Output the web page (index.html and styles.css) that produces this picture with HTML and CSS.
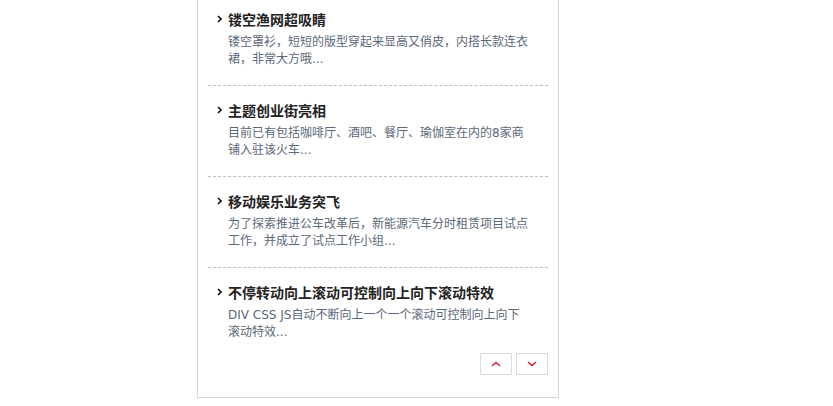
FILE: index.html
```html
<!DOCTYPE html>
<html lang="zh-CN">
<head>
<meta charset="utf-8">
<title>滚动新闻</title>
<link rel="stylesheet" href="styles.css">
</head>
<body>
<div class="box">
  <ul class="list">
    <li class="item">
      <h3 class="title"><svg class="arrow" width="5" height="8" viewBox="0 0 5 8"><path d="M1 1 L4 4 L1 7" fill="none" stroke="#111" stroke-width="1.6"/></svg>镂空渔网超吸睛</h3>
      <p class="desc">镂空罩衫，短短的版型穿起来显高又俏皮，内搭长款连衣裙，非常大方哦...</p>
    </li>
    <li class="item">
      <h3 class="title"><svg class="arrow" width="5" height="8" viewBox="0 0 5 8"><path d="M1 1 L4 4 L1 7" fill="none" stroke="#111" stroke-width="1.6"/></svg>主题创业街亮相</h3>
      <p class="desc">目前已有包括咖啡厅、酒吧、餐厅、瑜伽室在内的8家商铺入驻该火车...</p>
    </li>
    <li class="item">
      <h3 class="title"><svg class="arrow" width="5" height="8" viewBox="0 0 5 8"><path d="M1 1 L4 4 L1 7" fill="none" stroke="#111" stroke-width="1.6"/></svg>移动娱乐业务突飞</h3>
      <p class="desc">为了探索推进公车改革后，新能源汽车分时租赁项目试点工作，并成立了试点工作小组...</p>
    </li>
    <li class="item last">
      <h3 class="title"><svg class="arrow" width="5" height="8" viewBox="0 0 5 8"><path d="M1 1 L4 4 L1 7" fill="none" stroke="#111" stroke-width="1.6"/></svg>不停转动向上滚动可控制向上向下滚动特效</h3>
      <p class="desc">DIV CSS JS自动不断向上一个一个滚动可控制向上向下滚动特效...</p>
    </li>
  </ul>
  <div class="controls">
    <button class="btn" type="button" aria-label="向上"><svg width="10" height="6" viewBox="0 0 10 6"><path d="M1 5 L5 1.5 L9 5" fill="none" stroke="#d0213a" stroke-width="1.5"/></svg></button>
    <button class="btn" type="button" aria-label="向下"><svg width="10" height="6" viewBox="0 0 10 6"><path d="M1 1 L5 4.5 L9 1" fill="none" stroke="#d0213a" stroke-width="1.5"/></svg></button>
  </div>
</div>
</body>
</html>
```
FILE: styles.css
```css
html, body {
  margin: 0;
  padding: 0;
  background: #fff;
}
body {
  font-family: "Noto Sans CJK SC", "Microsoft YaHei", sans-serif;
}
.box {
  width: 340px;
  margin: -5px 0 0 197px;
  padding: 0 10px 22px;
  border: 1px solid #d6d6d6;
  border-top: none;
}
.list {
  list-style: none;
  margin: 0;
  padding: 0;
}
.item {
  padding: 14px 0 17px 20px;
  border-bottom: 1px dashed #bdbdbd;
}
.item.last {
  border-bottom: none;
  padding-bottom: 12px;
}
.title {
  position: relative;
  margin: 0 0 5px;
  font-size: 14px;
  line-height: 20px;
  font-weight: bold;
  color: #222;
}
.arrow {
  position: absolute;
  left: -11px;
  top: 6px;
}
.desc {
  margin: 0;
  width: 301px;
  font-family: "DejaVu Sans", "Noto Sans CJK SC", sans-serif;
  font-size: 12px;
  line-height: 17px;
  color: #5a6878;
}
.controls {
  display: flex;
  justify-content: flex-end;
  gap: 4px;
}
.btn {
  width: 32px;
  height: 22px;
  padding: 0;
  border: 1px solid #dcdcdc;
  background: #fff;
  display: flex;
  align-items: center;
  justify-content: center;
}
.btn svg {
  display: block;
}
```
